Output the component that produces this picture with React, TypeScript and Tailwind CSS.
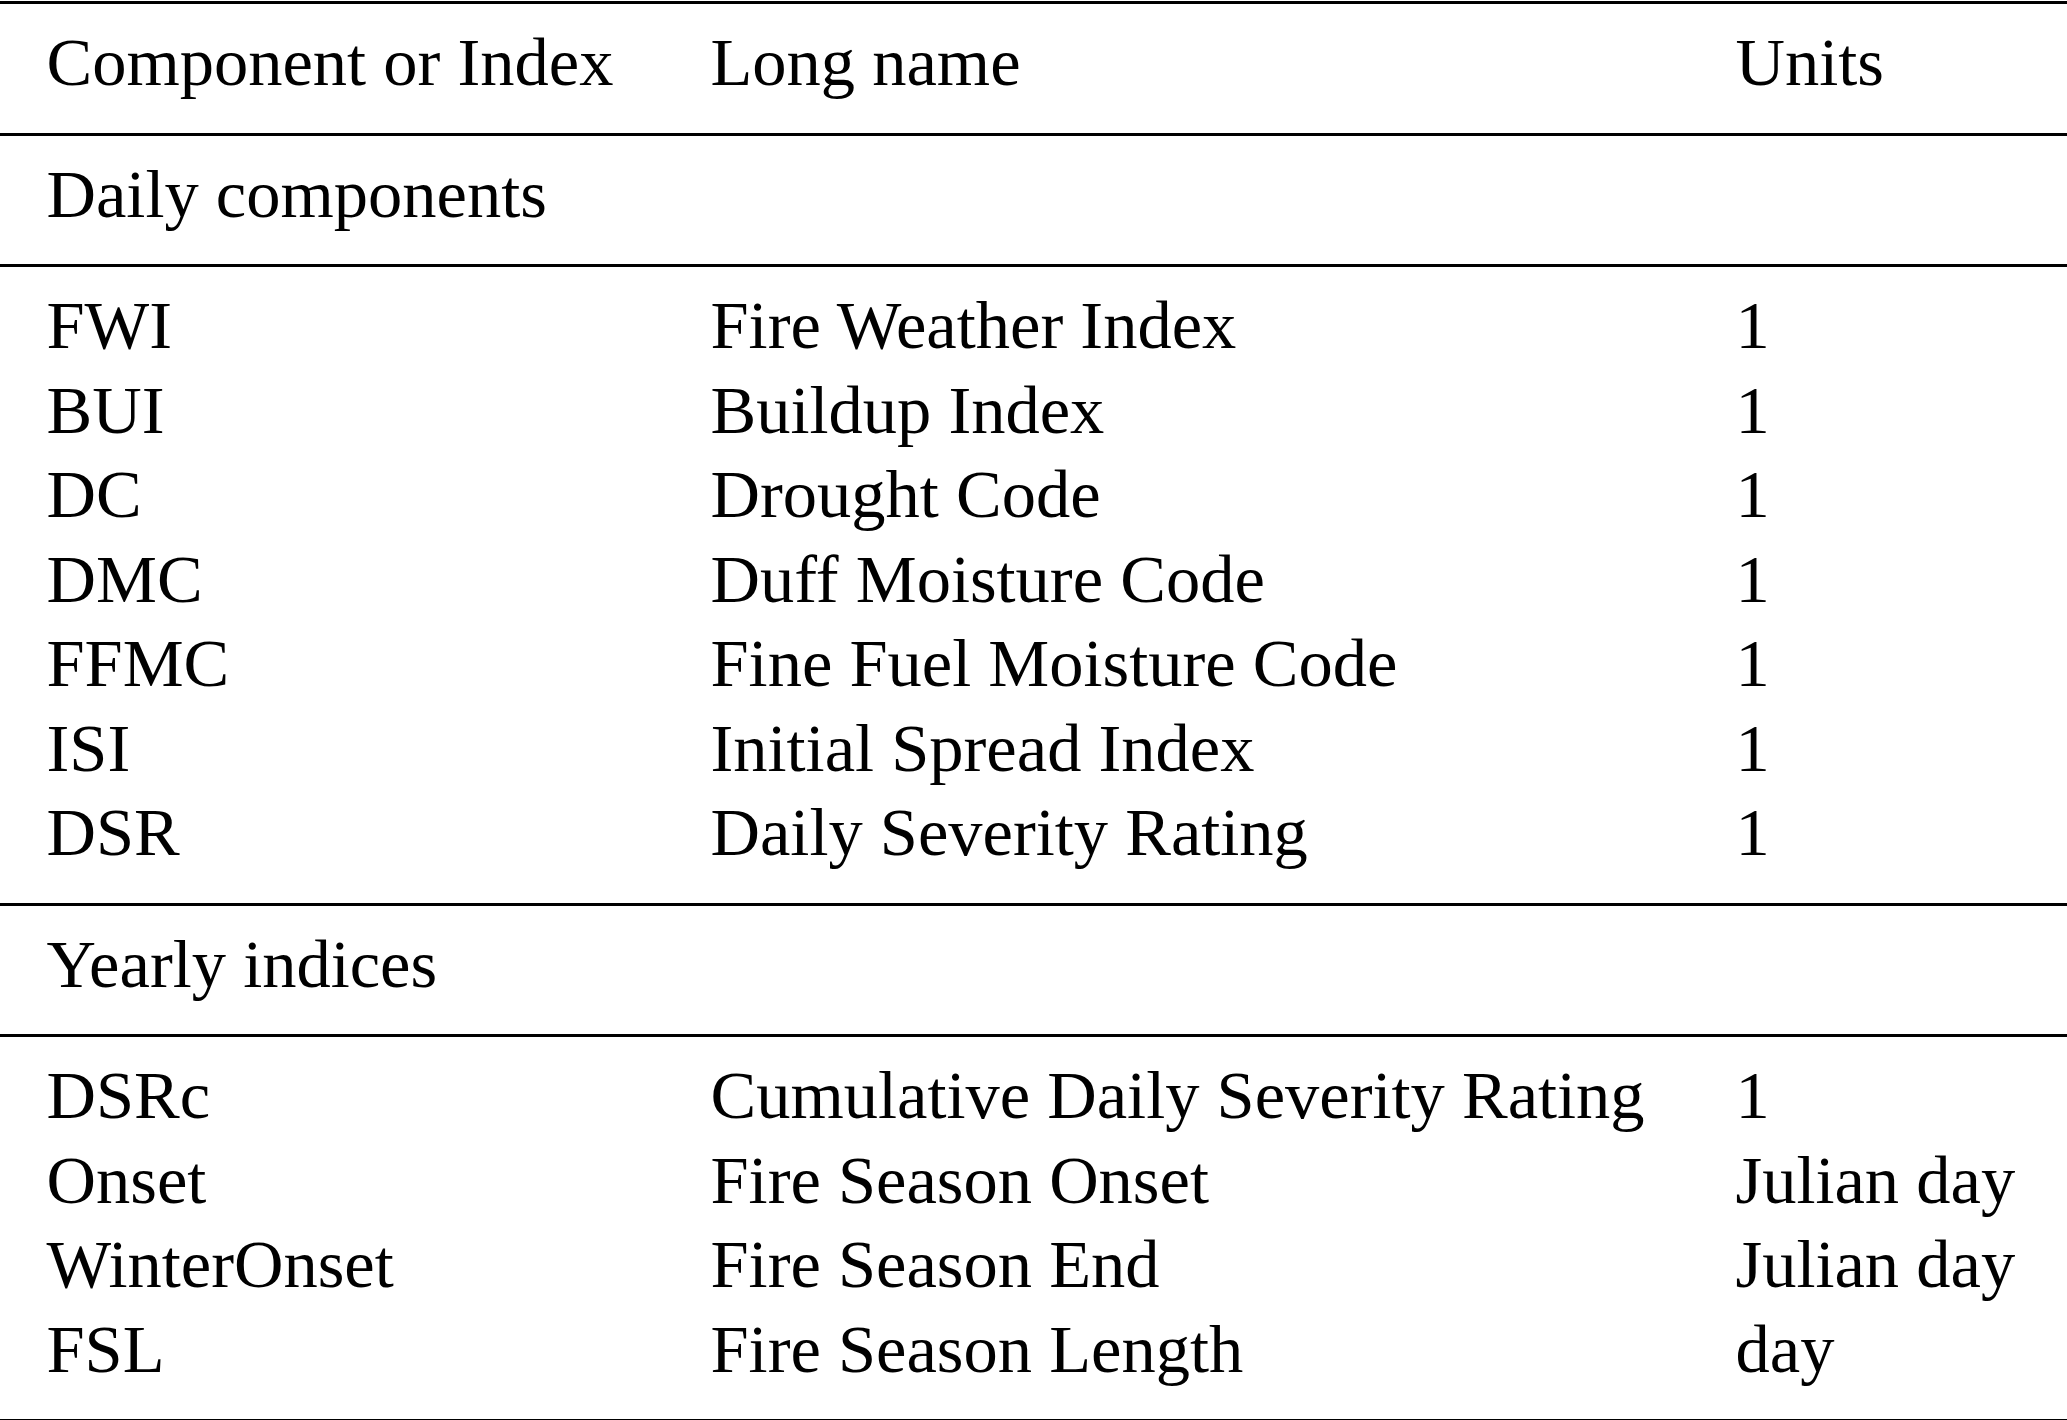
import React from "react";

type Row = { code: string; name: string; units: string };

const daily: Row[] = [
  { code: "FWI", name: "Fire Weather Index", units: "1" },
  { code: "BUI", name: "Buildup Index", units: "1" },
  { code: "DC", name: "Drought Code", units: "1" },
  { code: "DMC", name: "Duff Moisture Code", units: "1" },
  { code: "FFMC", name: "Fine Fuel Moisture Code", units: "1" },
  { code: "ISI", name: "Initial Spread Index", units: "1" },
  { code: "DSR", name: "Daily Severity Rating", units: "1" },
];

const yearly: Row[] = [
  { code: "DSRc", name: "Cumulative Daily Severity Rating", units: "1" },
  { code: "Onset", name: "Fire Season Onset", units: "Julian day" },
  { code: "WinterOnset", name: "Fire Season End", units: "Julian day" },
  { code: "FSL", name: "Fire Season Length", units: "day" },
];

const grid = "grid grid-cols-[664px_1025px_1fr] pl-[46.5px]";

function Rule() {
  return <div className="h-[3px] bg-black" />;
}

function Section({ children }: { children: React.ReactNode }) {
  return <div className="pt-4 pb-[28px]">{children}</div>;
}

function Rows({ rows }: { rows: Row[] }) {
  return (
    <Section>
      {rows.map((r) => (
        <div key={r.code} className={grid}>
          <span>{r.code}</span>
          <span>{r.name}</span>
          <span>{r.units}</span>
        </div>
      ))}
    </Section>
  );
}

export default function App() {
  return (
    <div
      className="w-[2067px] h-[1420px] bg-white text-black text-[68.5px] leading-[84.5px] pt-[1px]"
      style={{ fontFamily: '"Liberation Serif", "Times New Roman", serif' }}
    >
      <Rule />
      <Section>
        <div className={grid}>
          <span>Component or Index</span>
          <span>Long name</span>
          <span>Units</span>
        </div>
      </Section>
      <Rule />
      <Section>
        <div className="pl-[46.5px]">Daily components</div>
      </Section>
      <Rule />
      <Rows rows={daily} />
      <Rule />
      <Section>
        <div className="pl-[46.5px]">Yearly indices</div>
      </Section>
      <Rule />
      <Rows rows={yearly} />
      <Rule />
    </div>
  );
}
